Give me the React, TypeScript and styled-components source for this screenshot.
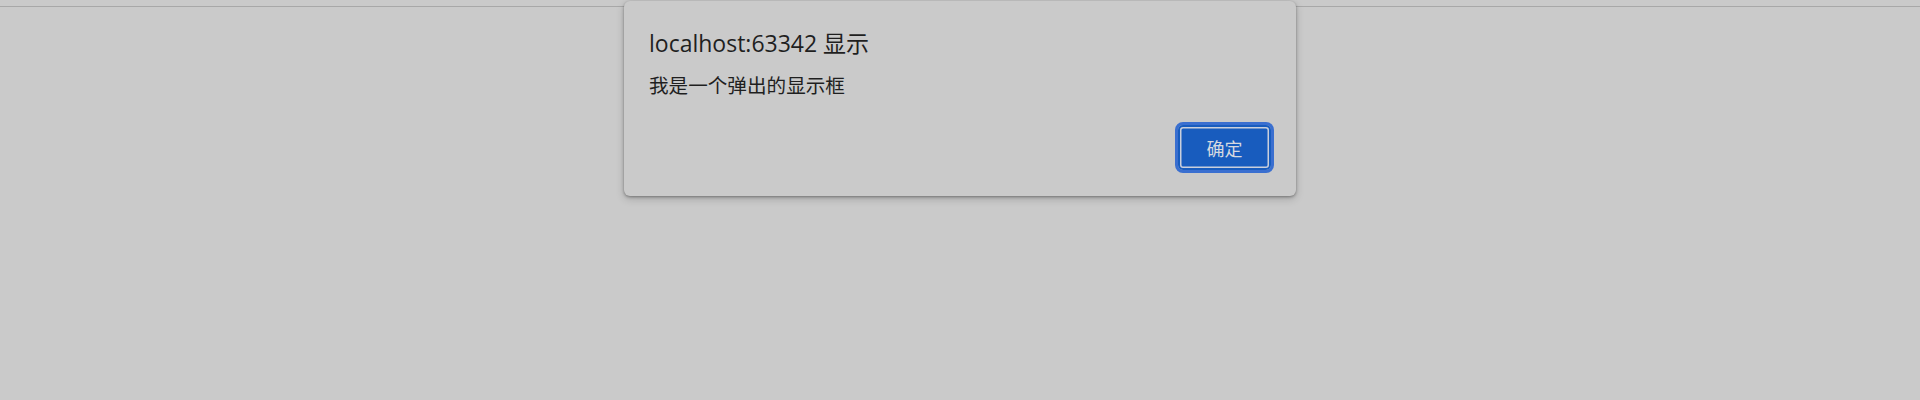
import React, { FC } from "react";
import styled, { createGlobalStyle } from "styled-components";

const GlobalStyle = createGlobalStyle`
  html, body {
    margin: 0;
    padding: 0;
    background: #cacaca;
  }
  body {
    font-family: "Open Sans", "Noto Sans CJK SC", sans-serif;
  }
`;

const Page = styled.div`
  position: relative;
  width: 1920px;
  height: 400px;
  background: #cacaca;
  overflow: hidden;
`;

const TopStrip = styled.div`
  height: 6px;
  border-bottom: 1.5px solid #a8a8a8;
`;

const Dialog = styled.div`
  position: absolute;
  top: 1px;
  left: 50%;
  transform: translateX(-50%);
  width: 672px;
  box-sizing: border-box;
  padding: 27px 25px 26px 25px;
  background: #cacaca;
  border-radius: 6px;
  box-shadow: 0 1px 3px rgba(0, 0, 0, 0.35), 0 3px 8px rgba(0, 0, 0, 0.18);
  display: flex;
  flex-direction: column;
  color: #1f1f1f;
`;

const Title = styled.div`
  font-family: "Open Sans", "Noto Sans CJK SC", sans-serif;
  font-size: 23px;
  line-height: 30px;
  margin-bottom: 14px;
`;

const Message = styled.div`
  font-family: "Noto Sans CJK SC", sans-serif;
  font-size: 19.6px;
  line-height: 26px;
`;

const Actions = styled.div`
  display: flex;
  justify-content: flex-end;
  margin-top: 27px;
`;

const Button = styled.button<{ $focused?: boolean }>`
  width: 93px;
  height: 45px;
  border: none;
  border-radius: 5px;
  background: #185cbe;
  color: #d6d9e0;
  font-family: "Noto Sans CJK SC", sans-serif;
  font-size: 18px;
  cursor: pointer;
  box-shadow: ${(p) =>
    p.$focused ? "inset 0 0 0 2px #185cbe, inset 0 0 0 3.5px #c9cfdc, 0 0 0 3px #3a6fd0" : "none"};
`;

const App: FC = () => {
  return (
    <>
      <GlobalStyle />
      <Page>
        <TopStrip />
        <Dialog>
          <Title>localhost:63342 显示</Title>
          <Message>我是一个弹出的显示框</Message>
          <Actions>
            <Button $focused>确定</Button>
          </Actions>
        </Dialog>
      </Page>
    </>
  );
};

export default App;
